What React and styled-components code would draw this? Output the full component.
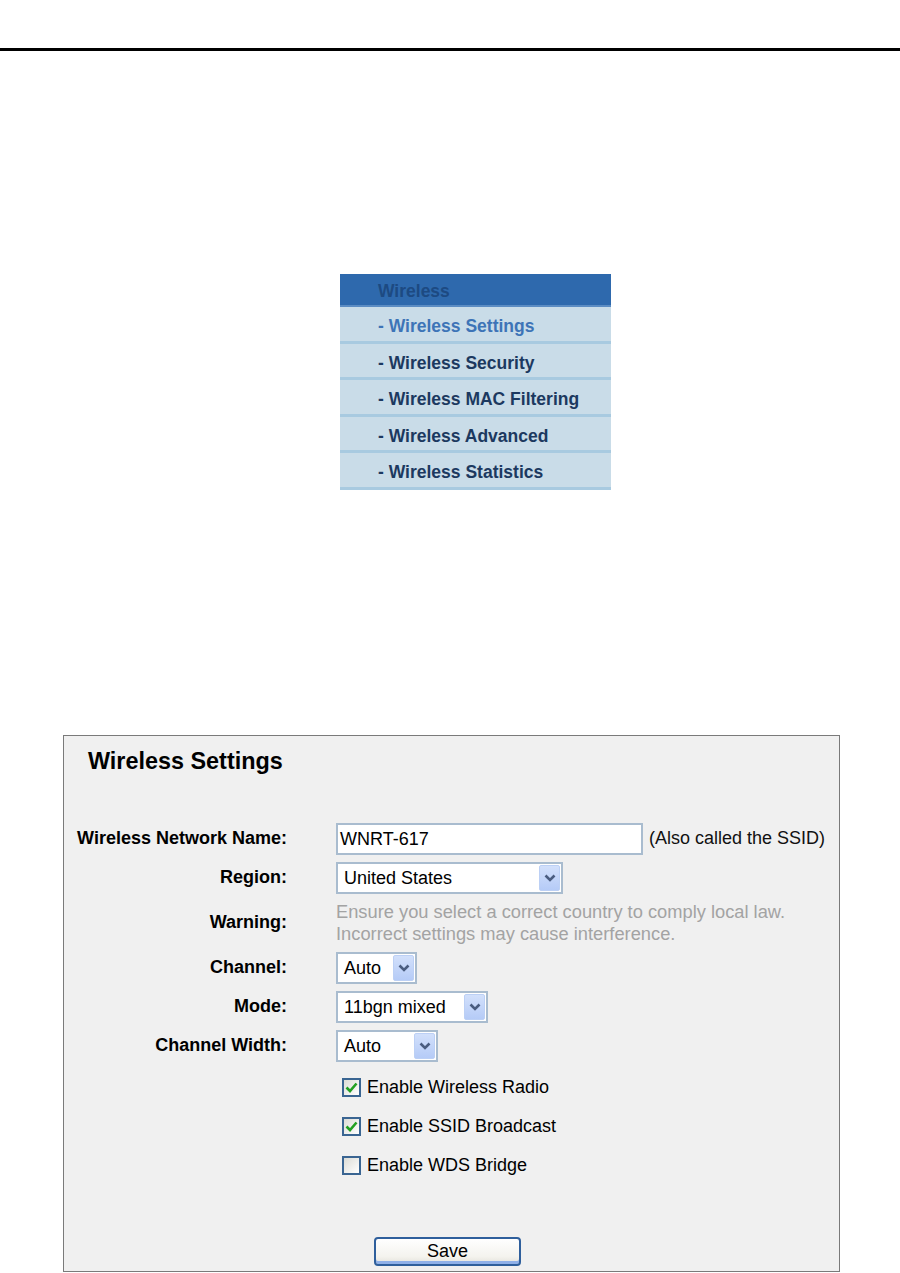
import React from 'react';
import styled, { createGlobalStyle } from 'styled-components';

const GlobalStyle = createGlobalStyle`
  html, body {
    margin: 0;
    padding: 0;
    background: #ffffff;
  }
  body {
    font-family: "Liberation Sans", Arial, sans-serif;
  }
`;

const menuItems = [
  { label: 'Wireless Settings', active: true },
  { label: 'Wireless Security' },
  { label: 'Wireless MAC Filtering' },
  { label: 'Wireless Advanced' },
  { label: 'Wireless Statistics' },
];

function Select({ value, width }) {
  return (
    <SelectBox $width={width}>
      <SelectValue>{value}</SelectValue>
      <ArrowButton>
        <svg width="12" height="8" viewBox="0 0 12 8">
          <path d="M1.5 1.5 L6 6 L10.5 1.5" fill="none" stroke="#4a5d80" strokeWidth="2.6" />
        </svg>
      </ArrowButton>
    </SelectBox>
  );
}

function Checkbox({ checked, label, first }) {
  return (
    <CheckRow $first={first}>
      <CheckSquare>
        {checked && (
          <svg width="13" height="11" viewBox="0 0 13 11">
            <path d="M1.5 5.5 L5 9 L11.5 1.5" fill="none" stroke="#22a022" strokeWidth="2.6" />
          </svg>
        )}
      </CheckSquare>
      <CheckText>{label}</CheckText>
    </CheckRow>
  );
}

export default function App() {
  return (
    <Page>
      <GlobalStyle />
      <TopRule />

      <Menu>
        <MenuHeader>Wireless</MenuHeader>
        {menuItems.map((item) => (
          <MenuRow key={item.label} $active={item.active}>
            - {item.label}
          </MenuRow>
        ))}
      </Menu>

      <Panel>
        <Title>Wireless Settings</Title>
        <Form>
          <Label>Wireless Network Name:</Label>
          <Field>
            <TextInput>WNRT-617</TextInput>
            <Hint>(Also called the SSID)</Hint>
          </Field>

          <Label>Region:</Label>
          <Field>
            <Select value="United States" width={227} />
          </Field>

          <Label>Warning:</Label>
          <Warning>
            Ensure you select a correct country to comply local law.
            <br />
            Incorrect settings may cause interference.
          </Warning>

          <Label>Channel:</Label>
          <Field>
            <Select value="Auto" width={81} />
          </Field>

          <Label>Mode:</Label>
          <Field>
            <Select value="11bgn mixed" width={152} />
          </Field>

          <Label>Channel Width:</Label>
          <Field>
            <Select value="Auto" width={102} />
          </Field>

          <Spacer />
          <Checkbox checked first label="Enable Wireless Radio" />

          <Spacer />
          <Checkbox checked label="Enable SSID Broadcast" />

          <Spacer />
          <Checkbox label="Enable WDS Bridge" />
        </Form>

        <SaveRow>
          <SaveButton>Save</SaveButton>
        </SaveRow>
      </Panel>
    </Page>
  );
}

const Page = styled.div`
  width: 900px;
  overflow: hidden;
`;

const TopRule = styled.div`
  margin-top: 48px;
  height: 3px;
  background: #000;
`;

const Menu = styled.div`
  margin: 223px 0 0 340px;
  width: 271px;
  font-family: "Liberation Sans", Arial, sans-serif;
  font-weight: bold;
  font-size: 17.5px;
`;

const MenuHeader = styled.div`
  height: 31px;
  line-height: 34px;
  overflow: hidden;
  padding-left: 38px;
  background: #2e69ad;
  border-bottom: 2px solid #5b8cc3;
  color: #1d4a82;
`;

const MenuRow = styled.div`
  height: 31.5px;
  padding-top: 2px;
  line-height: 34px;
  overflow: hidden;
  padding-left: 38px;
  background: #c9dce8;
  border-bottom: 3px solid #a8cae0;
  color: ${(p) => (p.$active ? '#3d74b7' : '#1c3960')};
`;

const Panel = styled.div`
  margin: 245px 0 0 63px;
  width: 775px;
  height: 535px;
  box-sizing: content-box;
  border: 1px solid #7a7a7a;
  background: #f0f0f0;
  display: flex;
  flex-direction: column;
`;

const Title = styled.div`
  margin: 12px 0 0 24px;
  font-size: 23.4px;
  line-height: 26px;
  font-weight: bold;
  color: #000;
`;

const Form = styled.div`
  margin-top: 49px;
  display: grid;
  grid-template-columns: 223px 1fr;
  column-gap: 49px;
  row-gap: 7px;
  font-size: 18px;
`;

const Label = styled.div`
  text-align: right;
  font-weight: bold;
  color: #000;
  align-self: center;
  white-space: nowrap;
`;

const Field = styled.div`
  display: flex;
  align-items: center;
  height: 32px;
`;

const TextInput = styled.div`
  box-sizing: border-box;
  width: 307px;
  height: 32px;
  border: 2px solid #a9bccf;
  background: #fff;
  padding-left: 2px;
  line-height: 28px;
  color: #000;
`;

const Hint = styled.span`
  margin-left: 6px;
  color: #111;
  white-space: nowrap;
`;

const SelectBox = styled.div`
  box-sizing: border-box;
  width: ${(p) => p.$width}px;
  height: 32px;
  border: 2px solid #a9bccf;
  background: #fff;
  display: flex;
  align-items: center;
  justify-content: space-between;
  padding: 1px;
`;

const SelectValue = styled.span`
  padding-left: 5px;
  line-height: 26px;
  color: #000;
  white-space: nowrap;
`;

const ArrowButton = styled.div`
  box-sizing: border-box;
  width: 21px;
  height: 26px;
  border: 1px solid #bcd0f5;
  border-radius: 2px;
  background: linear-gradient(to bottom, #d2e0fb, #b5cbf7);
  display: flex;
  align-items: center;
  justify-content: center;
`;

const Warning = styled.div`
  color: #a3a3a3;
  font-size: 18.3px;
  line-height: 22px;
  white-space: nowrap;
`;

const Spacer = styled.div``;

const CheckRow = styled.div`
  display: flex;
  align-items: center;
  height: 32px;
  padding-left: 6px;
  margin-top: ${(p) => (p.$first ? '3px' : '0')};
`;

const CheckSquare = styled.div`
  box-sizing: border-box;
  width: 19px;
  height: 19px;
  border: 2px solid #3a6592;
  background: linear-gradient(135deg, #dcdcd6, #ffffff);
  display: flex;
  align-items: center;
  justify-content: center;
`;

const CheckText = styled.span`
  margin-left: 6px;
  color: #000;
  white-space: nowrap;
`;

const SaveRow = styled.div`
  margin-top: auto;
  margin-bottom: 5px;
  padding-left: 310px;
`;

const SaveButton = styled.button`
  box-sizing: border-box;
  width: 147px;
  height: 29px;
  border: 2px solid #2f5f9c;
  border-radius: 4px;
  background: linear-gradient(to bottom, #ffffff 0%, #f4f3ee 70%, #e4e2da 100%);
  box-shadow: inset 0 -3px 0 #8fb0e8;
  font-family: "Liberation Sans", Arial, sans-serif;
  font-size: 18px;
  color: #000;
  padding: 0;
  line-height: 24px;
`;
